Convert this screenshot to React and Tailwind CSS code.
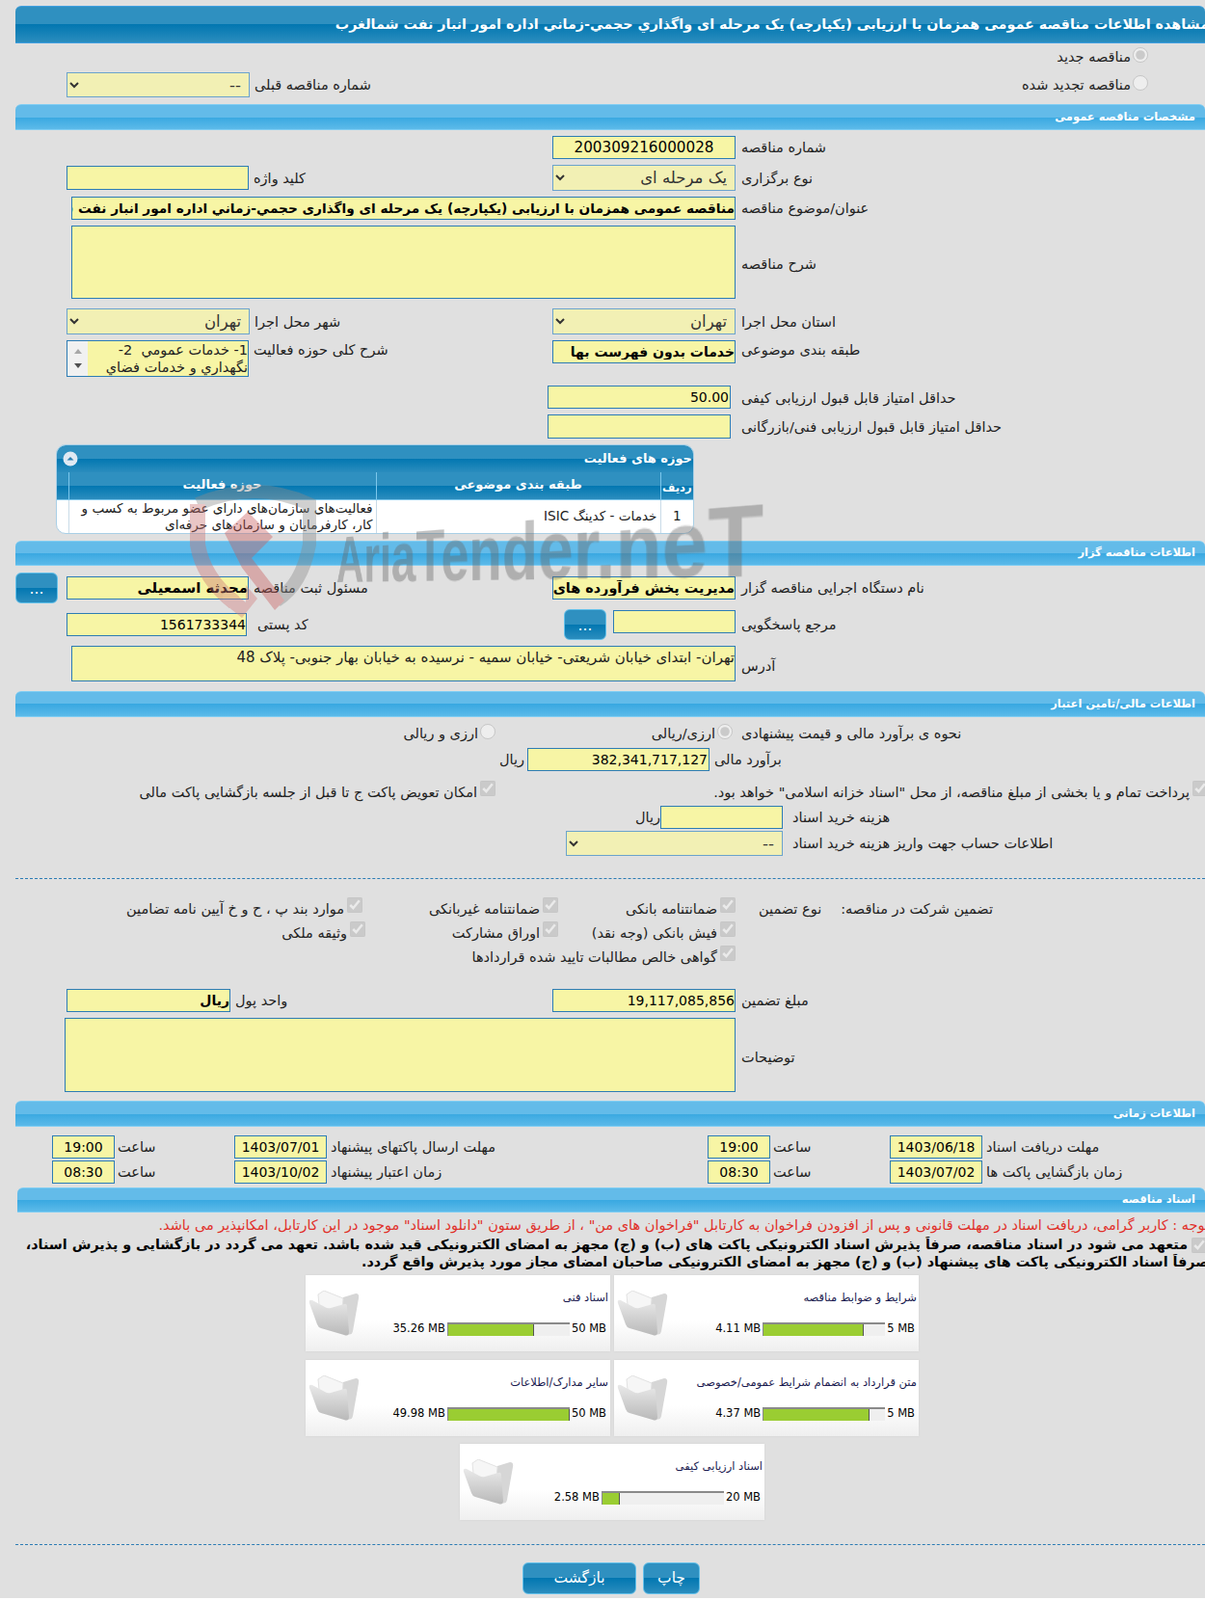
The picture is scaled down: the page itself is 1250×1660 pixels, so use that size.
import React from 'react'

// ── shared bars ─────────────────────────────────────────────
const TitleBar = ({ children }) => (
  <div className="ml-[16px] h-[39px] rounded-t-md border-t border-b border-[#3f9fe0] bg-[linear-gradient(to_bottom,#2f90c0_0%,#2f90c0_50%,#0277b1_50%,#2b8dbe_100%)] flex items-center justify-end overflow-hidden">
    <span dir="rtl" className="whitespace-nowrap -mr-[4px] text-white font-bold text-[14.3px]">{children}</span>
  </div>
)

const Section = ({ children, className = '' }) => (
  <div className={`rounded-t-md border-t border-b border-[#7fcdf3] bg-[linear-gradient(to_bottom,#63bbe9_0%,#63bbe9_50%,#39a8e1_50%,#5cbae9_100%)] flex items-center justify-end pr-[10px] ${className}`}>
    <span dir="rtl" className="whitespace-nowrap text-white font-bold text-[11.5px]">{children}</span>
  </div>
)

// ── form controls ───────────────────────────────────────────
const Label = ({ children, className = 'pt-[2px]' }) => (
  <span dir="rtl" className={`whitespace-nowrap text-[14.5px] text-[#222] ${className}`}>{children}</span>
)

const Input = ({ value = '', className = '', bold }) => (
  <input
    readOnly
    dir="rtl"
    value={value}
    className={`block bg-[#f7f5a5] border border-[#2c7cb4] text-black outline-none ${bold ? 'font-bold' : ''} ${className || ''} text-[14px]`}
  />
)

const Select = ({ value, className = '' }) => (
  <select dir="rtl" defaultValue={value} className={`block bg-[#f2f0b4] border border-[#6ba3cc] text-[16.5px] text-[#333] pr-[4px] outline-none ${className}`}>
    <option value={value}>{value}</option>
  </select>
)

const Area = ({ value = '', className = '' }) => (
  <div dir="rtl" className={`bg-[#f7f5a5] border border-[#2c7cb4] text-[15px] text-[#222] ${className}`}>{value}</div>
)

// left half of a row: control + its label
const LeftField = ({ label, children }) => (
  <div className="flex items-center gap-[5px]">
    {children}
    <Label>{label}</Label>
  </div>
)

// x=69..763 holds the controls, the row label starts at 769
const Row = ({ left, control, label, className = '', align = 'items-center', labelClass = 'ml-[6px] pt-[2px]' }) => (
  <div className={`flex ${align} ${className}`}>
    <div className={`w-[763px] pl-[69px] flex ${align} justify-between shrink-0`}>
      <div>{left}</div>
      {control}
    </div>
    {label && <Label className={labelClass}>{label}</Label>}
  </div>
)

const Check = ({ children, className = '' }) => (
  <div dir="rtl" className={`flex items-center gap-[3px] ${className}`}>
    <input type="checkbox" disabled defaultChecked className="w-4 h-4 m-0 mb-[8px] shrink-0" />
    <Label>{children}</Label>
  </div>
)

const Radio = ({ children, checked, className = '' }) => (
  <div dir="rtl" className={`flex items-center gap-[2px] ${className}`}>
    <input type="radio" disabled defaultChecked={checked} className="w-4 h-4 m-0 mb-[5px] shrink-0" />
    <Label>{children}</Label>
  </div>
)

const BlueButton = ({ children, className = '' }) => (
  <button className={`rounded-[6px] border border-[#62c0ea] bg-[linear-gradient(to_bottom,#2f90c0_0%,#2f90c0_50%,#0277b1_50%,#2b8dbe_100%)] text-white text-[15.5px] ${className}`}>
    {children}
  </button>
)

// ── date row ────────────────────────────────────────────────
const Dates = ({ label, date, time, w }) => (
  <div className={`flex items-center ${w}`}>
    <Input value={time} className="w-[65px] h-[24px] text-center" />
    <Label className="ml-[3px] pt-[2px] w-[121px] text-left">ساعت</Label>
    <Input value={date} className="w-[96px] h-[24px] text-center" />
    <Label className="ml-[4px] pt-[2px]">{label}</Label>
  </div>
)

// ── document cards ──────────────────────────────────────────
const Folder = () => (
  <svg width="54" height="48" viewBox="0 0 54 48" className="shrink-0">
    <defs>
      <linearGradient id="fg" x1="0" y1="0" x2="0" y2="1">
        <stop offset="0" stopColor="#e9e9e9" />
        <stop offset="1" stopColor="#b9b9b9" />
      </linearGradient>
    </defs>
    <path d="M36 7 L49 3 Q53 3 52 8 L46 42 Q45 47 40 45 L30 40 Z" fill="#d6d6d6" />
    <path d="M10 4 L16 0 L36 8 L34 30 L12 26 Z" fill="#f6f6f6" stroke="#e2e2e2" />
    <path d="M1 13 Q0 9 4 10 L17 17 Q20 19 23 18 L37 14 Q40 13 40 17 L42 43 Q42 48 37 46 L13 39 Q10 38 9 35 Z" fill="url(#fg)" />
  </svg>
)

const DocCard = ({ title, used, max, pct }) => (
  <div className="w-[316px] h-[79px] bg-[linear-gradient(to_bottom,#ffffff_0%,#ffffff_60%,#efefef_100%)] flex items-center pl-[3px] pr-[4px] shadow-[0_0_2px_#d0d0d0]">
    <Folder />
    <div className="flex-1 flex flex-col items-end h-full pt-[15px]">
      <span dir="rtl" className="whitespace-nowrap text-[11.5px] text-[#1a1a50] h-[18px] -mr-[2px]">{title}</span>
      <div className="mt-[14px] flex items-center justify-end text-[11.5px] text-black">
        <span className="mr-[2px] whitespace-nowrap">{used} MB</span>
        <div className="w-[127px] h-[14px] bg-[#efefef] border-t-2 border-l border-[#8a8a8a] flex">
          <div className="h-full bg-[#9acd32] border-r border-[#555]" style={{ width: `${pct}%` }} />
        </div>
        <span className="ml-[2px] whitespace-nowrap">{max} MB</span>
      </div>
    </div>
  </div>
)

// ── scrolling activity box ──────────────────────────────────
const ActivityBox = () => (
  <div className="w-[189px] h-[38px] border border-[#2c7cb4] bg-[#f7f5a5] flex overflow-hidden">
    <div className="w-[21px] bg-[#f1f1f1] shrink-0 flex flex-col items-center justify-around py-[3px]">
      <div className="w-0 h-0 border-x-[4px] border-x-transparent border-b-[5px] border-b-[#a8a8a8]" />
      <div className="w-0 h-0 border-x-[4px] border-x-transparent border-t-[5px] border-t-[#505050]" />
    </div>
    <div dir="rtl" className="flex-1 text-[14.5px] leading-[18px] text-[#222] whitespace-pre-wrap overflow-hidden">
      {'1- خدمات عمومي  2- نگهداري و خدمات فضاي'}
    </div>
  </div>
)

// ── watermark lies over the page ────────────────────────────
const Watermark = () => (
  <div className="absolute left-[195px] top-[495px] w-[620px] h-[150px] pointer-events-none z-10 opacity-40">
    <svg width="140" height="150" viewBox="0 0 140 150" className="absolute left-0 top-0">
      <path d="M10 28 Q70 2 126 28 L126 70 Q118 112 92 128" fill="none" stroke="#8a8a8a" strokeWidth="14" />
      <path d="M10 28 L10 70 Q16 105 48 130" fill="none" stroke="#c97070" strokeWidth="16" />
      <path d="M38 58 L62 36 L88 62 L66 84 L100 128 L90 138 L56 94 Z" fill="#c75a5a" />
      <path d="M36 110 L60 130 L60 112 L72 126 L56 146 L36 130 Z" fill="#d27a7a" />
    </svg>
    <span className="absolute left-[154px] top-[52px] origin-bottom-left [transform:perspective(600px)_rotateY(-40deg)_scaleX(0.74)] whitespace-nowrap font-['Liberation_Sans',sans-serif] font-bold text-[67px] leading-none text-[#666]">
      AriaTender.neT
    </span>
  </div>
)

export default function App() {
  return (
    <div className="relative w-[1250px] h-[1658px] overflow-hidden bg-[#e0e0e0] pt-[6px] font-['DejaVu_Sans',sans-serif] text-[13px]">
      <TitleBar>مشاهده اطلاعات مناقصه عمومی همزمان با ارزیابی (یکپارچه) یک مرحله ای واگذاري حجمي-زماني اداره امور انبار نفت شمالغرب</TitleBar>

      {/* new / renewed */}
      <div className="h-[28px] flex items-center justify-end pr-[59px]">
        <Radio checked>مناقصه جدید</Radio>
      </div>
      <div className="mt-[2px] h-[26px] flex items-center justify-between pl-[69px] pr-[59px]">
        <LeftField label="شماره مناقصه قبلی"><Select value="--" className="w-[190px] h-[26px]" /></LeftField>
        <Radio>مناقصه تجدید شده</Radio>
      </div>

      <Section className="mt-[7px] ml-[16px] h-[27px]">مشخصات مناقصه عمومی</Section>

      <Row className="mt-[6px] h-[24px]" control={<Input value="200309216000028" className="w-[190px] h-[24px] text-center !text-[15.2px]" />} label="شماره مناقصه" />
      <Row className="mt-[6px] h-[27px]"
        left={<LeftField label="کلید واژه"><Input className="w-[189px] h-[25px]" /></LeftField>}
        control={<Select value="یک مرحله ای" className="w-[190px] h-[27px]" />}
        label="نوع برگزاری" />
      <Row className="mt-[6px] h-[24px]" control={<Input bold value="مناقصه عمومی همزمان با ارزیابی (یکپارچه) یک مرحله ای واگذاري حجمي-زماني اداره امور انبار نفت شمالغرب" className="w-[689px] h-[24px] !text-[13.7px]" />} label="عنوان/موضوع مناقصه" />
      <Row className="mt-[6px] h-[76px]" labelClass="ml-[6px] pt-[6px]" control={<Area className="w-[689px] h-[76px]" />} label="شرح مناقصه" />
      <Row className="mt-[10px] h-[27px]"
        left={<LeftField label="شهر محل اجرا"><Select value="تهران" className="w-[190px] h-[27px]" /></LeftField>}
        control={<Select value="تهران" className="w-[190px] h-[27px]" />}
        label="استان محل اجرا" />
      <Row className="mt-[6px] h-[38px]" align="items-start" labelClass="ml-[6px]"
        left={<div className="flex items-start gap-[5px]"><ActivityBox /><Label className="">شرح کلی حوزه فعالیت</Label></div>}
        control={<Input bold value="خدمات بدون فهرست بها" className="w-[190px] h-[24px]" />}
        label="طبقه بندی موضوعی" />
      <div className="mt-[9px] h-[24px] flex items-center justify-start pl-[568px]">
        <Input value="50.00" className="w-[190px] h-[24px] pl-0 pr-[1px]" />
        <Label className="ml-[11px] pt-[3px]">حداقل امتیاز قابل قبول ارزیابی کیفی</Label>
      </div>
      <div className="mt-[6px] h-[25px] flex items-center pl-[568px]">
        <Input className="w-[190px] h-[25px]" />
        <Label className="ml-[11px] pt-[2px]">حداقل امتیاز قابل قبول ارزیابی فنی/بازرگانی</Label>
      </div>

      {/* activity table */}
      <div className="mt-[6px] ml-[58px] w-[662px] h-[93px] rounded-[10px] overflow-hidden border border-[#a9cfe6] bg-white">
        <div className="h-[28px] px-[6px] flex items-center justify-between bg-[linear-gradient(to_bottom,#2f90c0_0%,#2f90c0_50%,#0277b1_50%,#2b8dbe_100%)]">
          <svg width="16" height="16" viewBox="0 0 16 16">
            <circle cx="8" cy="8" r="7.5" fill="#dfe9f3" />
            <path d="M4.5 9.5 L8 6 L11.5 9.5 Z" fill="#2b7fb0" />
          </svg>
          <span dir="rtl" className="text-white font-bold text-[13px] -mr-[5px]">حوزه های فعالیت</span>
        </div>
        <table className="w-full table-fixed border-collapse">
          <colgroup>
            <col className="w-[12px]" />
            <col className="w-[319px]" />
            <col className="w-[295px]" />
            <col />
          </colgroup>
          <thead>
            <tr className="h-[28px] bg-[linear-gradient(to_bottom,#2f90c0_0%,#2f90c0_50%,#0277b1_50%,#2b8dbe_100%)] text-white text-[13px] font-bold">
              <th className="border-r border-[#7cc7ec]" />
              <th className="border-r border-[#7cc7ec] font-bold pb-[2px]"><span dir="rtl">حوزه فعالیت</span></th>
              <th className="border-r border-[#7cc7ec] font-bold pb-[2px]"><span dir="rtl">طبقه بندی موضوعی</span></th>
              <th className="font-bold text-[11.5px] whitespace-nowrap pt-[5px]"><span dir="rtl">ردیف</span></th>
            </tr>
          </thead>
          <tbody>
            <tr className="border-t border-[#7cc7ec] text-[13.6px] text-[#222]">
              <td className="border-r border-[#c9dbe7]" />
              <td dir="rtl" className="border-r border-[#c9dbe7] leading-[17px] px-[3px]">فعالیت‌های سازمان‌های دارای عضو مربوط به کسب و کار، کارفرمایان و سازمان‌های حرفه‌ای</td>
              <td dir="rtl" className="border-r border-[#c9dbe7] px-[3px]">خدمات - کدینگ ISIC</td>
              <td className="text-center">1</td>
            </tr>
          </tbody>
        </table>
      </div>

      <Section className="mt-[7px] ml-[16px] h-[26px]">اطلاعات مناقصه گزار</Section>

      <div className="mt-[7px] h-[32px] flex items-center pl-[16px]">
        <BlueButton className="w-[44px] h-[32px] shrink-0 pt-[4px]">...</BlueButton>
        <div className="ml-[9px] w-[504px]">
          <LeftField label="مسئول ثبت مناقصه"><Input bold value="محدثه اسمعیلی" className="w-[189px] h-[24px] !text-[15px]" /></LeftField>
        </div>
        <Input bold value="مدیریت پخش فرآورده های نفتی منطقه تهران" className="w-[190px] h-[24px] !text-[14.4px]" />
        <Label className="ml-[6px] pt-[2px]">نام دستگاه اجرایی مناقصه گزار</Label>
      </div>
      <div className="mt-[6px] h-[32px] flex items-center pl-[69px]">
        <div className="w-[516px] flex items-center">
          <Input value="1561733344" className="w-[187px] h-[24px]" />
          <Label className="ml-[11px] pt-[2px]">کد پستی</Label>
        </div>
        <BlueButton className="w-[44px] h-[32px] shrink-0 pt-[4px]">...</BlueButton>
        <Input className="ml-[7px] mb-[6px] w-[127px] h-[24px]" />
        <Label className="ml-[6px] pt-[2px]">مرجع پاسخگویی</Label>
      </div>
      <Row className="mt-[6px] h-[37px]" labelClass="ml-[6px] pt-[6px]" control={<Area value="تهران- ابتدای خیابان شریعتی- خیابان سمیه - نرسیده به خیابان بهار جنوبی- پلاک 48" className="w-[689px] h-[37px]" />} label="آدرس" />

      <Section className="mt-[10px] ml-[16px] h-[27px]">اطلاعات مالی/تامین اعتبار</Section>

      {/* financial rows */}
      <div className="mt-[6px] h-[22px] flex items-center">
        <div className="w-[514px] flex justify-end"><Radio>ارزی و ریالی</Radio></div>
        <div className="w-[246px] flex justify-end"><Radio checked>ارزی/ریالی</Radio></div>
        <Label className="ml-[9px] pt-[2px]">نحوه ی برآورد مالی و قیمت پیشنهادی</Label>
      </div>
      <div className="mt-[4px] h-[24px] flex items-center pl-[518px]">
        <Label className="w-[29px] pt-[2px] text-left">ریال</Label>
        <Input value="382,341,717,127" className="w-[189px] h-[24px] pr-[1px]" />
        <Label className="ml-[5px] pt-[2px]">برآورد مالی</Label>
      </div>
      <div className="mt-[11px] h-[22px] flex items-center justify-end">
        <div className="w-[514px] flex justify-end -mr-[2px] shrink-0"><Check>امکان تعویض پاکت ج تا قبل از جلسه بازگشایی پاکت مالی</Check></div>
        <div className="flex-1 flex justify-end -mr-[3px]"><Check className="gap-[1px]">پرداخت تمام و یا بخشی از مبلغ مناقصه، از محل "اسناد خزانه اسلامی" خواهد بود.</Check></div>
      </div>
      <div className="mt-[3px] h-[24px] flex items-center pl-[662px]">
        <Label className="w-[23px] pt-[2px] text-left">ریال</Label>
        <Input className="w-[127px] h-[24px]" />
        <Label className="ml-[10px] pt-[2px]">هزینه خرید اسناد</Label>
      </div>
      <div className="mt-[2px] h-[26px] flex items-center pl-[587px]">
        <Select value="--" className="w-[225px] h-[26px]" />
        <Label className="ml-[10px] pt-[2px]">اطلاعات حساب جهت واریز هزینه خرید اسناد</Label>
      </div>

      <div className="mt-[23px] ml-[16px] border-t border-dashed border-[#2c7cb4]" />

      {/* guarantee */}
      <div className="mt-[18px] grid grid-cols-[376px_203px_184px_1fr] grid-rows-[25px_25px_25px] items-center">
        <Check>موارد بند پ ، ح و خ آیین نامه تضامین</Check>
        <Check>ضمانتنامه غیربانکی</Check>
        <Check>ضمانتنامه بانکی</Check>
        <div className="flex items-center">
          <Label className="ml-[24px] pt-[2px]">نوع تضمین</Label>
          <Label className="ml-[20px] pt-[2px]">تضمین شرکت در مناقصه:</Label>
        </div>
        <Check className="-mr-[3px]">وثیقه ملکی</Check>
        <Check>اوراق مشارکت</Check>
        <Check>فیش بانکی (وجه نقد)</Check>
        <div />
        <div />
        <div />
        <Check>گواهی خالص مطالبات تایید شده قراردادها</Check>
      </div>

      <Row className="mt-[21px] h-[24px]"
        left={<LeftField label="واحد پول"><Input bold value="ریال" className="w-[170px] h-[24px]" /></LeftField>}
        control={<Input value="19,117,085,856" className="w-[190px] h-[24px]" />}
        label="مبلغ تضمین" />
      <div className="mt-[6px] h-[77px] flex items-center pl-[67px]">
        <Area className="w-[696px] h-[77px]" />
        <Label className="ml-[6px] pt-[6px]">توضیحات</Label>
      </div>

      <Section className="mt-[9px] ml-[16px] h-[27px]">اطلاعات زمانی</Section>

      <div className="mt-[8px] h-[25px] flex items-center pl-[54px]">
        <Dates w="w-[680px]" label="مهلت ارسال پاکتهای پیشنهاد" date="1403/07/01" time="19:00" />
        <Dates label="مهلت دریافت اسناد" date="1403/06/18" time="19:00" />
      </div>
      <div className="mt-[2px] h-[24px] flex items-center pl-[54px]">
        <Dates w="w-[680px]" label="زمان اعتبار پیشنهاد" date="1403/10/02" time="08:30" />
        <Dates label="زمان بازگشایی پاکت ها" date="1403/07/02" time="08:30" />
      </div>

      <Section className="mt-[4px] ml-[18px] h-[26px]">اسناد مناقصه</Section>

      {/* notices */}
      <div className="mt-[2px] h-[23px] flex items-center justify-end overflow-hidden">
        <span dir="rtl" className="whitespace-nowrap text-[14.5px] text-[#e0302a] -mr-[4px]">توجه : کاربر گرامی، دریافت اسناد در مهلت قانونی و پس از افزودن فراخوان به کارتابل "فراخوان های من" ، از طریق ستون "دانلود اسناد" موجود در این کارتابل، امکانپذیر می باشد.</span>
      </div>
      <div className="h-[18px] flex items-center justify-end overflow-hidden">
        <span dir="rtl" className="whitespace-nowrap font-bold text-[14.3px] text-black">متعهد می شود در اسناد مناقصه، صرفاً پذیرش اسناد الکترونیکی پاکت های (ب) و (ج) مجهز به امضای الکترونیکی قید شده باشد. تعهد می گردد در بازگشایی و پذیرش اسناد،</span>
        <input type="checkbox" disabled defaultChecked className="w-4 h-4 m-0 ml-[4px] -mr-[2px] shrink-0" />
      </div>
      <div className="h-[18px] flex items-center justify-end overflow-hidden">
        <span dir="rtl" className="whitespace-nowrap font-bold text-[14.3px] text-black -mr-[4px]">صرفاً اسناد الکترونیکی پاکت های پیشنهاد (ب) و (ج) مجهز به امضای الکترونیکی صاحبان امضای مجاز مورد پذیرش واقع گردد.</span>
      </div>

      {/* documents */}
      <div className="mt-[4px] flex flex-col items-center">
        <div className="flex gap-[4px] ml-[20px]">
          <DocCard title="اسناد فنی" used="35.26" max="50" pct={71} />
          <DocCard title="شرایط و ضوابط مناقصه" used="4.11" max="5" pct={82} />
        </div>
        <div className="mt-[9px] flex gap-[4px] ml-[20px]">
          <DocCard title="سایر مدارک/اطلاعات" used="49.98" max="50" pct={100} />
          <DocCard title="متن قرارداد به انضمام شرایط عمومی/خصوصی" used="4.37" max="5" pct={87} />
        </div>
        <div className="mt-[8px] ml-[20px]">
          <DocCard title="اسناد ارزیابی کیفی" used="2.58" max="20" pct={14} />
        </div>
      </div>

      <div className="mt-[25px] ml-[16px] border-t border-dashed border-[#2c7cb4]" />

      <div className="mt-[18px] flex justify-start pl-[542px] gap-[7px]">
        <BlueButton className="w-[118px] h-[33px]">بازگشت</BlueButton>
        <BlueButton className="w-[59px] h-[33px]">چاپ</BlueButton>
      </div>

      <Watermark />
    </div>
  )
}
